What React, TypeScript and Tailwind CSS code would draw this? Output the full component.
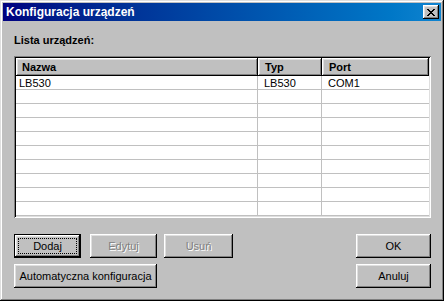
import React from 'react';

const raised =
  'shadow-[inset_-1px_-1px_#000,inset_1px_1px_#fff,inset_-2px_-2px_#808080,inset_2px_2px_#dfdfdf]';

interface BtnProps {
  label: string;
  width: string;
  disabled?: boolean;
  isDefault?: boolean;
}

const Btn: React.FC<BtnProps> = ({ label, width, disabled, isDefault }) => {
  if (isDefault) {
    return (
      <div className={`${width} h-[24px] border border-black bg-[#c0c0c0]`}>
        <div className={`w-full h-full ${raised} flex items-center justify-center p-[3px]`}>
          <div className="w-full h-full border border-dotted border-black flex items-center justify-center text-black">
            {label}
          </div>
        </div>
      </div>
    );
  }
  return (
    <div
      className={`${width} h-[24px] bg-[#c0c0c0] ${raised} flex items-center justify-center ${
        disabled ? 'text-[#808080] [text-shadow:1px_1px_#fff]' : 'text-black'
      }`}
    >
      {label}
    </div>
  );
};

const rows = [
  { name: 'LB530', type: 'LB530', port: 'COM1' },
  ...Array.from({ length: 9 }, () => ({ name: '', type: '', port: '' })),
];

export default function App() {
  return (
    <div
      className="w-[444px] h-[301px] bg-[#c0c0c0] p-[3px] flex flex-col text-[11px] leading-[13px] shadow-[inset_-1px_-1px_#000,inset_1px_1px_#dfdfdf,inset_-2px_-2px_#808080,inset_2px_2px_#fff]"
      style={{ fontFamily: '"Liberation Sans", Arial, sans-serif' }}
    >
      {/* Title bar */}
      <div className="h-[18px] flex items-center justify-between pl-[3px] pr-[2px] bg-gradient-to-r from-[#000080] to-[#1084d0]">
        <span className="text-white font-bold text-[12px]">Konfiguracja urządzeń</span>
        <div className={`w-[16px] h-[14px] bg-[#c0c0c0] ${raised} flex items-center justify-center`}>
          <svg width="8" height="7" viewBox="0 0 8 7" shapeRendering="crispEdges">
            <path d="M0 0h2v1H0zM6 0h2v1H6zM1 1h2v1H1zM5 1h2v1H5zM2 2h4v1H2zM3 3h2v1H3zM2 4h4v1H2zM1 5h2v1H1zM5 5h2v1H5zM0 6h2v1H0zM6 6h2v1H6z" fill="#000" />
          </svg>
        </div>
      </div>

      {/* Body */}
      <div className="flex-1 flex flex-col pl-[11px] pr-[10px] pt-[13px]">
        <div className="font-bold text-black h-[13px]">Lista urządzeń:</div>

        {/* List view */}
        <div className="mt-[9px] h-[162px] bg-white p-[2px] shadow-[inset_1px_1px_#808080,inset_-1px_-1px_#fff,inset_2px_2px_#000,inset_-2px_-2px_#dfdfdf] flex flex-col overflow-hidden">
          <div className="flex h-[18px] font-bold text-black">
            <div className={`w-[242px] bg-[#c0c0c0] ${raised} flex items-center pl-[6px]`}>Nazwa</div>
            <div className={`w-[64px] bg-[#c0c0c0] ${raised} flex items-center pl-[7px]`}>Typ</div>
            <div className={`flex-1 bg-[#c0c0c0] ${raised} flex items-center pl-[7px]`}>Port</div>
          </div>
          {rows.map((r, i) => (
            <div key={i} className="flex h-[14px] border-b border-[#c0c0c0] text-black">
              <div className="w-[242px] pl-[3px] pt-[1px] border-r border-[#c0c0c0] flex items-center">{r.name}</div>
              <div className="w-[64px] pl-[6px] pt-[1px] border-r border-[#c0c0c0] flex items-center">{r.type}</div>
              <div className="flex-1 pl-[6px] pt-[1px] flex items-center">{r.port}</div>
            </div>
          ))}
        </div>

        {/* Buttons */}
        <div className="mt-[16px] flex justify-between">
          <div className="flex flex-col gap-[6px]">
            <div className="flex gap-[9px]">
              <Btn label="Dodaj" width="w-[67px]" isDefault />
              <div className="flex gap-[7px]">
                <Btn label="Edytuj" width="w-[67px]" disabled />
                <Btn label="Usuń" width="w-[69px]" disabled />
              </div>
            </div>
            <Btn label="Automatyczna konfiguracja" width="w-[143px]" />
          </div>
          <div className="flex flex-col gap-[6px]">
            <Btn label="OK" width="w-[75px]" />
            <Btn label="Anuluj" width="w-[75px]" />
          </div>
        </div>
      </div>
    </div>
  );
}
